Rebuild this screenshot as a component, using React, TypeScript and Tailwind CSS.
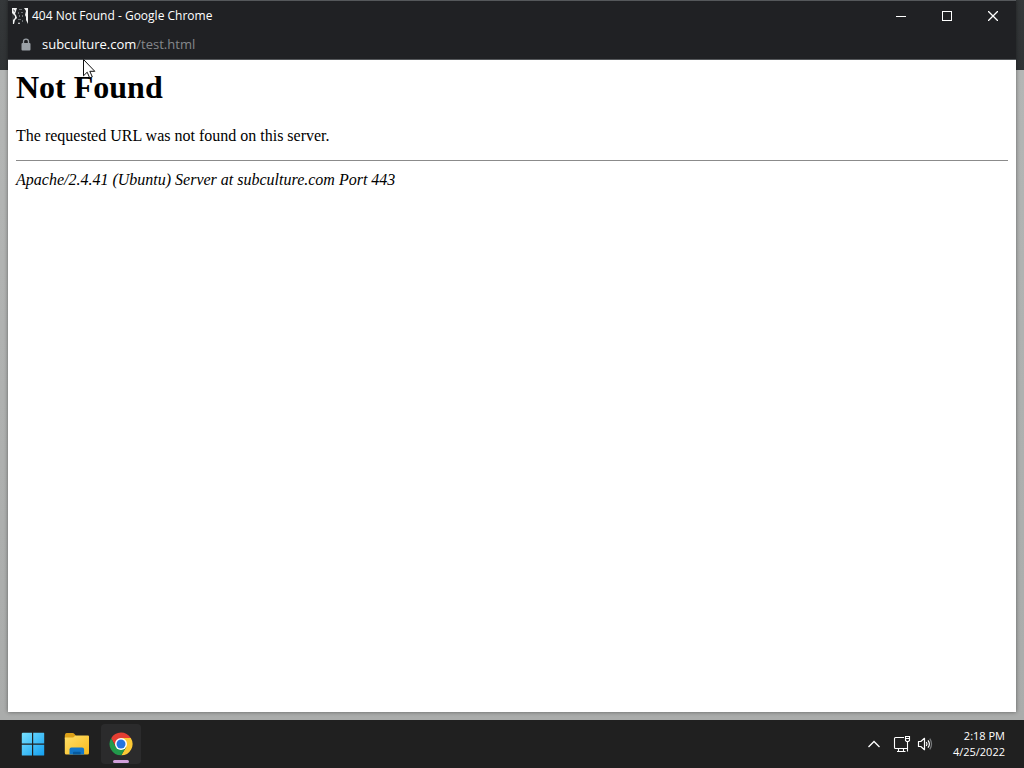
import React from "react";

function Favicon() {
  return (
    <svg width="16" height="16" viewBox="0 0 16 16" aria-hidden="true">
      <rect width="16" height="16" fill="#f2f3f3" />
      <path d="M5 0h7l2 3-1 4 1 2v3l2 4H8l-1-2-1 2H2l1-4 2-2-1-3-1-1 1-3z" fill="#202225" />
      <path d="M0 5 3 8v2L1 12v4H0zM1 1l2 2-1 1z" fill="#303336" />
      <path d="M7 1h3v1H7zM6 4h1v2H6zM9 4h2v1H9zM7 7h1v2H7zM10 7h1v2h-1zM6 11h3v1H6zM10 12h1v2h-1z" fill="#6b6f72" />
    </svg>
  );
}

function LockIcon() {
  return (
    <svg width="10" height="14" viewBox="0 0 10 14" aria-hidden="true">
      <rect x="0.5" y="5" width="9" height="7.5" rx="1" fill="#9aa0a6" />
      <path d="M2.5 5.5V3.6a2.5 2.5 0 0 1 5 0v1.9" fill="none" stroke="#9aa0a6" strokeWidth="1.3" />
    </svg>
  );
}

function WindowsIcon() {
  return (
    <svg width="24" height="24" viewBox="0 0 24 24" aria-hidden="true">
      <defs>
        <linearGradient id="win" x1="0" y1="0" x2="24" y2="24" gradientUnits="userSpaceOnUse">
          <stop offset="0" stopColor="#7be3ff" />
          <stop offset="1" stopColor="#109df0" />
        </linearGradient>
      </defs>
      <path d="M1.5 0.8H11v10.7H.8v-10zM12.2.8h10.5q.5 0 .5.5v10.2h-11zM.8 12.7H11v10.8H1.3q-.5 0-.5-.5zM12.2 12.7h11V23q0 .5-.5.5H12.2z" fill="url(#win)" />
    </svg>
  );
}

function FolderIcon() {
  return (
    <svg width="26" height="24" viewBox="0 0 26 24" aria-hidden="true">
      <defs>
        <linearGradient id="folder" x1="0" y1="0" x2="1" y2="1">
          <stop offset="0" stopColor="#ffdf68" />
          <stop offset="1" stopColor="#f7b91d" />
        </linearGradient>
      </defs>
      <path d="M.8 3.500Q.8 1 2.500 1h6.200q1 0 1.800 1l1.400 1.800-2 3.200H.8z" fill="#dca018" />
      <path d="M.8 5.500h8.400l2.300-2H24q1 0 1 1V21q0 1.500-1.500 1.500H2.300Q.8 22.500.8 21z" fill="url(#folder)" />
      <path d="M5.500 22.500v-5.100q0-1.900 1.900-1.900h10.800q1.900 0 1.900 1.900v5.100z" fill="#1377c9" />
      <path d="M9 22.500v-2q0-.8.8-.8h6q.8 0 .8.8v2z" fill="#075a9e" />
    </svg>
  );
}

function ChromeIcon() {
  return (
    <svg width="24" height="24" viewBox="0 0 48 48" aria-hidden="true">
      <path d="M24 12h19.600A22.700 22.700 0 0 0 4.400 12.600L13.600 30z" fill="#e43e32" />
      <path d="M34.400 30 24.600 46.700A22.700 22.700 0 0 0 43.600 12H24z" fill="#fcc934" />
      <path d="M13.600 30 4.300 12.500A22.700 22.700 0 0 0 24.600 46.700L34.400 30z" fill="#229a4b" />
      <circle cx="24" cy="24" r="12" fill="#fff" />
      <circle cx="24" cy="24" r="9" fill="#2374df" />
    </svg>
  );
}

function NetworkIcon() {
  return (
    <svg width="18" height="18" viewBox="0 0 18 18" fill="none" stroke="#fff" strokeWidth="1.100" aria-hidden="true">
      <path d="M11 2.500H2.500q-1 0-1 1v9q0 1 1 1h12M5.500 13.500v3M10.500 13.500v3M4 16.500h8.500" />
      <path d="M12.500 1.500h4v4l-1 1h-2l-1-1zM12.500 3.500h4M14.500 6.500v10" />
    </svg>
  );
}

function VolumeIcon() {
  return (
    <svg width="16" height="16" viewBox="0 0 16 16" fill="none" stroke="#fff" strokeWidth="1.200" strokeLinejoin="round" aria-hidden="true">
      <path d="M1.500 5.500h2.300L7.500 2.300v11.400L3.800 10.500H1.500z" />
      <path d="M9.300 6q1.500 2 0 4M11 4.300q2.800 3.700 0 7.400" />
      <path d="M12.800 2.700q3.500 5.300 0 10.600" stroke="#77797b" />
    </svg>
  );
}

function WindowControls() {
  const button = "flex h-7 w-[46px] items-center justify-center";
  return (
    <div className="flex">
      <button type="button" aria-label="Minimize" className={button}>
        <svg width="10" height="10" stroke="#fff"><path d="M0 5.500h10" /></svg>
      </button>
      <button type="button" aria-label="Maximize" className={button}>
        <svg width="10" height="10" fill="none" stroke="#fff"><rect x=".5" y=".5" width="9" height="9" /></svg>
      </button>
      <button type="button" aria-label="Close" className={button}>
        <svg width="10" height="10" stroke="#fff" strokeWidth="1.300"><path d="m0 0 10 10M10 0 0 10" /></svg>
      </button>
    </div>
  );
}

function BrowserWindow() {
  return (
    <section className="relative flex grow flex-col bg-white shadow-[0_0_4px_rgba(0,0,0,0.45)]">
      <header className="border-y border-[#55585b] bg-[#202124] font-['Open_Sans',sans-serif]">
        <div className="flex h-[29px] items-center justify-between pl-1">
          <div className="flex items-center gap-1">
            <Favicon />
            <h2 className="text-xs text-white">404 Not Found - Google Chrome</h2>
          </div>
          <WindowControls />
        </div>
        <div className="flex h-[29px] items-center gap-[11px] pl-[13px] text-[13px] text-[#85888c]">
          <LockIcon />
          <p><span className="text-white">subculture.com</span>/test.html</p>
        </div>
      </header>
      <main className="px-2 pt-2 font-['Liberation_Serif',serif] text-base leading-[19px] text-black">
        <h1 className="text-[32px] leading-[38px] font-bold">Not Found</h1>
        <p className="mt-5">The requested URL was not found on this server.</p>
        <hr className="mt-[15px] mb-[9px] border-t border-[#8b8b8b]" />
        <address>Apache/2.4.41 (Ubuntu) Server at subculture.com Port 443</address>
      </main>
      <svg className="pointer-events-none absolute top-[59px] left-[75px]" width="13" height="20" viewBox="0 0 13 20" aria-hidden="true">
        <path d="M.5.5v16.300l3.700-3.600 2.500 5.700 2.600-1.100-2.500-5.500h5z" fill="#fff" stroke="#111" />
      </svg>
    </section>
  );
}

function Taskbar() {
  return (
    <footer className="flex h-12 items-center justify-between bg-[#202020] pr-[19px] pl-[13px] font-['Open_Sans',sans-serif] text-white">
      <nav className="flex items-center gap-1" aria-label="Taskbar">
        <button type="button" aria-label="Start" className="flex size-10 items-center justify-center"><WindowsIcon /></button>
        <button type="button" aria-label="File Explorer" className="flex size-10 items-center justify-center"><FolderIcon /></button>
        <button type="button" aria-label="Google Chrome" className="relative flex size-10 items-center justify-center rounded bg-[#2b2b2c]">
          <ChromeIcon />
          <span className="absolute bottom-px h-[3px] w-4 rounded-full bg-[#d2a0db]" />
        </button>
      </nav>
      <div className="flex items-center">
        <button type="button" aria-label="Show hidden icons" className="mr-3">
          <svg width="14" height="10" viewBox="0 0 14 10" fill="none" stroke="#fff" strokeWidth="1.300" aria-hidden="true"><path d="m1.500 8 5.500-5.500L12.500 8" /></svg>
        </button>
        <button type="button" aria-label="Network and volume" className="flex items-center gap-1.5">
          <NetworkIcon />
          <VolumeIcon />
        </button>
        <time dateTime="2022-04-25T14:18" className="ml-4 w-14 text-right text-[11px] leading-4">
          2:18 PM<br />4/25/2022
        </time>
      </div>
    </footer>
  );
}

export default function App() {
  return (
    <div className="flex min-h-screen flex-col">
      <div className="flex grow flex-col bg-[linear-gradient(#35383a_0px,#303335_70px,#b4b6b5_70px,#aaacab_100%)] px-2 pb-2">
        <BrowserWindow />
      </div>
      <Taskbar />
    </div>
  );
}
